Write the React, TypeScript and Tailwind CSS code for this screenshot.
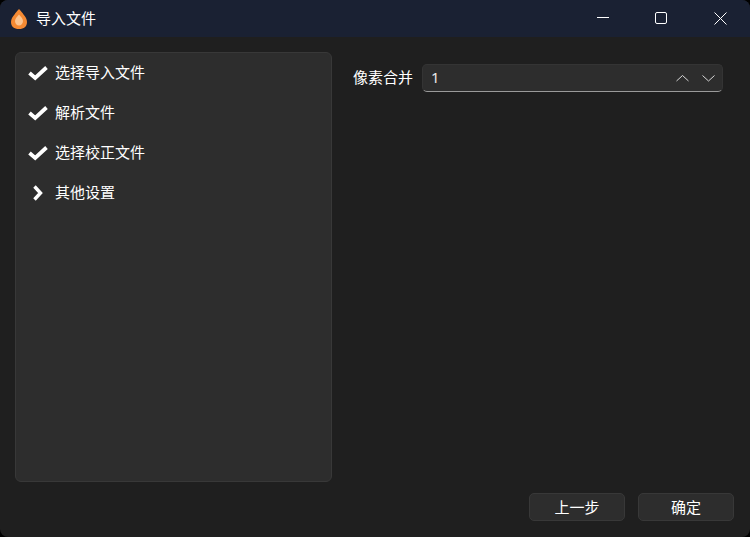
const FONT = "font-['Noto_Sans','Noto_Sans_CJK_SC',sans-serif]";

const STEPS = [
  { label: '选择导入文件', done: true },
  { label: '解析文件', done: true },
  { label: '选择校正文件', done: true },
  { label: '其他设置', done: false },
];

function CheckIcon() {
  return (
    <svg width="20" height="16" viewBox="0 0 20 16" fill="none">
      <path d="M1.5 8 L7.2 13 L18.5 2.5" stroke="#fff" strokeWidth="3.8" />
    </svg>
  );
}

function ChevronIcon() {
  return (
    <svg width="20" height="16" viewBox="0 0 20 16" fill="none">
      <path d="M6.5 1.5 L12.5 8 L6.5 14.5" stroke="#fff" strokeWidth="3.4" />
    </svg>
  );
}

function AppLogo() {
  return (
    <svg width="18" height="20" viewBox="0 0 18 20">
      <path d="M9 0 C11.5 2.5 12.5 4 13.5 5.5 C15.5 8 17 10 17 13 C17 17.5 14 20 9 20 C4 20 1 17.5 1 13 C1 10 2.5 8 4.5 5.5 C5.5 4 6.5 2.5 9 0 Z" fill="#f58a33" />
      <path d="M9 5.5 C10.5 7.5 13 9.5 13 12 C13 14.5 11.2 16.5 9 16.5 C6.8 16.5 5 14.5 5 12 C5 9.5 7.5 7.5 9 5.5 Z" fill="#fcc48f" />
    </svg>
  );
}

function TitleBar() {
  return (
    <div className="flex h-[37px] shrink-0 items-center bg-[#1a2133]">
      <div className="ml-[10px] flex w-[26px] items-center">
        <AppLogo />
      </div>
      <span className="text-[15px] text-white">导入文件</span>
      <div className="ml-auto flex h-full">
        {/* minimize / maximize / close */}
        <button className="flex w-[59px] items-center justify-center pb-[2px] pl-[2px]">
          <svg width="12" height="12" viewBox="0 0 12 12" fill="none">
            <path d="M0 5.5 H12" stroke="#fff" />
          </svg>
        </button>
        <button className="flex w-[59px] items-center justify-center pb-[1px]">
          <svg width="12" height="12" viewBox="0 0 12 12" fill="none">
            <rect x="0.5" y="0.5" width="11" height="11" rx="1.5" stroke="#fff" />
          </svg>
        </button>
        <button className="flex w-[60px] items-center justify-center pb-[1px] pl-[1px]">
          <svg width="13" height="13" viewBox="0 0 13 13" fill="none">
            <path d="M0.5 0.5 L12.5 12.5 M12.5 0.5 L0.5 12.5" stroke="#fff" />
          </svg>
        </button>
      </div>
    </div>
  );
}

export default function App() {
  return (
    <div className="h-[537px] w-[750px] overflow-hidden bg-black">
      <div className={`flex h-full flex-col overflow-hidden rounded-[8px] bg-[#1f1f1f] ${FONT}`}>
        <TitleBar />

        <div className="flex flex-1 flex-col px-[16px] pb-[16px] pt-[15px]">
          <div className="flex flex-1 gap-[21px]">
            {/* Steps panel */}
            <div className="ml-[-1px] h-[430px] w-[317px] rounded-[6px] border border-[#383838] bg-[#2d2d2d] pl-[12px]">
              {STEPS.map((step) => (
                <div key={step.label} className="flex h-10 items-center gap-[7px]">
                  {step.done ? <CheckIcon /> : <ChevronIcon />}
                  <span className="mb-[2px] text-[15px] text-white">{step.label}</span>
                </div>
              ))}
            </div>

            {/* Settings */}
            <div className="mt-[12px] flex h-[28px] flex-1 items-center gap-[9px] pr-[11px]">
              <span className="mb-[2px] text-[15px] text-white">像素合并</span>
              <div className="flex h-[28px] flex-1 items-center rounded-[5px] border border-[#343434] border-b-[#9a9a9a] bg-[#2d2d2d] pl-[8px] pr-[6px]">
                <span className="mb-[2px] flex-1 text-[15px] text-[#e8e8e8]">1</span>
                <svg width="40" height="10" viewBox="0 0 40 10" fill="none">
                  <path d="M0.5 8 L6.5 2.5 L12.5 8" stroke="#d8d8d8" />
                  <path d="M26.5 2.5 L32.5 8 L38.5 2.5" stroke="#d8d8d8" />
                </svg>
              </div>
            </div>
          </div>

          <div className="flex justify-end gap-[13px]">
            <button className="h-[28px] w-[96px] rounded-[5px] border border-[#383838] bg-[#2d2d2d] text-[15px] text-white">
              上一步
            </button>
            <button className="h-[28px] w-[96px] rounded-[5px] border border-[#383838] bg-[#2d2d2d] text-[15px] text-white">
              确定
            </button>
          </div>
        </div>
      </div>
    </div>
  );
}
